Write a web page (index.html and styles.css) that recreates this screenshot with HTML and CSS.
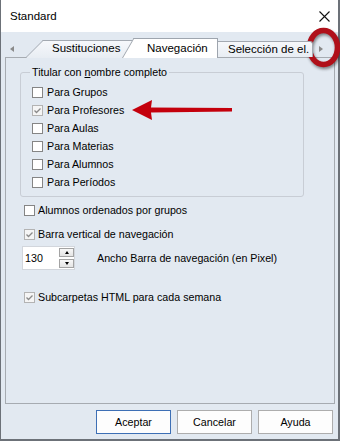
FILE: index.html
```html
<!DOCTYPE html>
<html lang="es">
  <head>
    <meta charset="UTF-8" />
    <meta name="viewport" content="width=device-width, initial-scale=1.0" />
    <title>Standard</title>
    <link rel="stylesheet" href="styles.css">
  </head>
  <body>
    <div class="window">
      <div class="titlebar">
        <span class="title">Standard</span>
        <svg class="close" width="11" height="11" viewBox="0 0 11 11">
          <path d="M0.5 0.5 L10.5 10.5 M10.5 0.5 L0.5 10.5" stroke="#111" stroke-width="1.1" fill="none" />
        </svg>
      </div>

      <div class="tabstrip">
        <div class="tab-scroll tab-scroll-left"><span class="arrow-left"></span></div>
        <div class="tab tab-back">Sustituciones</div>
        <div class="tab tab-active">Navegación</div>
        <div class="tab tab-last">Selección de el.</div>
        <div class="tab-scroll tab-scroll-right"><span class="arrow-right"></span></div>
      </div>

      <div class="panel">
        <fieldset class="group">
          <legend>Titular con <u>n</u>ombre completo</legend>
          <div class="check-row"><span class="box"></span>Para Grupos</div>
          <div class="check-row">
            <span class="box checked">
              <svg width="9" height="9" viewBox="0 0 9 9"><path d="M1.5 4.5 L3.5 6.5 L7.5 2.5" stroke="#8a8a8a" stroke-width="1.3" fill="none" /></svg>
            </span>Para Profesores
          </div>
          <div class="check-row"><span class="box"></span>Para Aulas</div>
          <div class="check-row"><span class="box"></span>Para Materias</div>
          <div class="check-row"><span class="box"></span>Para Alumnos</div>
          <div class="check-row"><span class="box"></span>Para Períodos</div>
        </fieldset>

        <div class="option option-sorted"><span class="box"></span>Alumnos ordenados por grupos</div>
        <div class="option option-navbar">
          <span class="box checked">
            <svg width="9" height="9" viewBox="0 0 9 9"><path d="M1.5 4.5 L3.5 6.5 L7.5 2.5" stroke="#8a8a8a" stroke-width="1.3" fill="none" /></svg>
          </span>Barra vertical de navegación
        </div>

        <div class="spin-row">
          <div class="spin">
            <span class="spin-value">130</span>
            <div class="spin-buttons">
              <span class="spin-btn"><span class="tri-up"></span></span>
              <span class="spin-btn"><span class="tri-down"></span></span>
            </div>
          </div>
          <span class="spin-label">Ancho Barra de navegación (en Pixel)</span>
        </div>

        <div class="option option-html">
          <span class="box checked">
            <svg width="9" height="9" viewBox="0 0 9 9"><path d="M1.5 4.5 L3.5 6.5 L7.5 2.5" stroke="#8a8a8a" stroke-width="1.3" fill="none" /></svg>
          </span>Subcarpetas HTML para cada semana
        </div>
      </div>

      <div class="footer">
        <button class="btn btn-default">Aceptar</button>
        <button class="btn">Cancelar</button>
        <button class="btn">Ayuda</button>
      </div>

      <!-- anotaciones rojas encima del diálogo -->
      <svg class="callout-arrow" width="104" height="26" viewBox="0 0 104 26">
        <polygon points="2,13 22,3 21,10.5 102,11 102,14.5 21,15.5 22,23" fill="#c4000c" />
      </svg>
      <svg class="callout-ring" width="40" height="46" viewBox="0 0 40 46">
        <ellipse cx="21.5" cy="21.5" rx="14" ry="17" stroke="#b0101a" stroke-width="5.6" fill="none" />
      </svg>
    </div>
  </body>
</html>
```

FILE: styles.css
```css
* {
  box-sizing: border-box;
}

body {
  margin: 0;
  background-color: #ffffff;
  font-family: "Liberation Sans", Arial, sans-serif;
  font-size: 10.7px;
  color: #000;
}

.window {
  position: relative;
  width: 340px;
  height: 441px;
  display: flex;
  flex-direction: column;
  background-color: #e2e9f1;
  border-left: 1px solid #6c7178;
  border-right: 2px solid #6c7178;
  border-bottom: 2px solid #6c7178;
}

/* barra de título */
.titlebar {
  height: 32px;
  flex: none;
  display: flex;
  align-items: center;
  justify-content: space-between;
  padding: 0 8px 0 9px;
  background-color: #ffffff;
  font-size: 11.5px;
}

.close {
  display: block;
}

/* pestañas */
.tabstrip {
  height: 25px;
  flex: none;
  display: flex;
  align-items: flex-end;
  font-size: 11.5px;
}

.tab-scroll {
  align-self: stretch;
  display: flex;
  align-items: flex-end;
  padding-bottom: 5px;
}

.tab-scroll-left {
  width: 24px;
  padding-left: 9px;
}

.tab-scroll-right {
  flex: 1;
  padding-left: 6px;
}

.arrow-left,
.arrow-right {
  width: 0;
  height: 0;
  border-top: 3.5px solid transparent;
  border-bottom: 3.5px solid transparent;
}

.arrow-left {
  border-right: 4px solid #8a8a8a;
}

.arrow-right {
  border-left: 4px solid #8a8a8a;
}

.tab {
  position: relative;
  z-index: 1;
  white-space: nowrap;
}

.tab::before,
.tab::after {
  content: "";
  position: absolute;
  z-index: -1;
}

.tab-back {
  width: 97px;
  height: 17px;
  line-height: 17px;
  padding-left: 27px;
}

.tab-back::before {
  left: 0;
  top: 0;
  width: 112px;
  height: 17px;
  transform: skewX(-45deg);
  transform-origin: 0 100%;
  border: 1px solid #a3a9b1;
  border-bottom: none;
  background: linear-gradient(#f6f8fb, #e8edf3);
}

.tab-active {
  z-index: 3;
  width: 96px;
  height: 20px;
  margin-bottom: -1px;
  padding: 1px 0 0 25px;
  line-height: 19px;
}

.tab-active::before {
  left: 0;
  top: 0;
  bottom: 0;
  width: 34px;
  transform: skewX(-30deg);
  transform-origin: 0 100%;
  border: solid #9ea5ae;
  border-width: 1px 0 0 1px;
  background-color: #ffffff;
}

.tab-active::after {
  left: 18px;
  right: 0;
  top: 0;
  bottom: 0;
  border: solid #9ea5ae;
  border-width: 1px 1px 0 0;
  background-color: #ffffff;
}

.tab-last {
  width: 96px;
  height: 16px;
  margin-left: -1px;
  padding-left: 10px;
  line-height: 15px;
  border: 1px solid #a3a9b1;
  border-bottom: none;
  border-top-right-radius: 3px;
  background: linear-gradient(#f6f8fb, #e8edf3);
  overflow: hidden;
}

/* contenido de la pestaña */
.panel {
  flex: none;
  height: 347px;
  margin: 0 3px 0 4px;
  border: 1px solid #a6abb1;
}

.group {
  width: 284px;
  margin: 8px 0 0 14px;
  padding: 4px 0 5px 11px;
  border: 1px solid #c8cdd5;
  border-radius: 3px;
  min-width: 0;
}

.group legend {
  padding: 0 2px;
  margin-left: -2px;
  line-height: 13px;
}

.check-row,
.option {
  display: flex;
  align-items: center;
  height: 18px;
}

.box {
  width: 11px;
  height: 11px;
  flex: none;
  display: flex;
  align-items: center;
  justify-content: center;
  margin-right: 4px;
  border: 1px solid #858585;
  background-color: #ffffff;
}

.box.checked {
  border-color: #b3b3b3;
  background-color: #f5f5f5;
}

.option {
  margin-left: 18px;
}

.option .box {
  margin-right: 3px;
}

.option-sorted {
  margin-top: 4px;
}

.option-navbar {
  margin-top: 6px;
}

.option-html {
  margin-top: 18px;
}

/* campo numérico */
.spin-row {
  display: flex;
  align-items: center;
  height: 24px;
  margin: 3px 0 0 16px;
}

.spin {
  display: flex;
  width: 53px;
  height: 24px;
  border: 1px solid #d2d6dc;
  background-color: #ffffff;
}

.spin-value {
  flex: 1;
  padding-left: 2px;
  line-height: 22px;
}

.spin-buttons {
  width: 15px;
  display: flex;
  flex-direction: column;
  justify-content: center;
  gap: 2px;
}

.spin-btn {
  height: 9px;
  display: flex;
  align-items: center;
  justify-content: center;
  border: 1px solid #a3a3a3;
  background: linear-gradient(#f8f8f8, #e4e4e4);
}

.tri-up,
.tri-down {
  width: 0;
  height: 0;
  border-left: 2.5px solid transparent;
  border-right: 2.5px solid transparent;
}

.tri-up {
  border-bottom: 3px solid #000;
}

.tri-down {
  border-top: 3px solid #000;
}

.spin-label {
  margin-left: 22px;
}

/* botones */
.footer {
  flex: 1;
  display: flex;
  justify-content: flex-end;
  align-items: flex-start;
  gap: 6px;
  padding: 6px 5px 0 0;
}

.btn {
  width: 75px;
  height: 24px;
  padding: 0;
  border: 1px solid #adadad;
  background-color: #fdfdfd;
  font: inherit;
  color: #000;
}

.btn-default {
  border-color: #3d6fb5;
}

/* anotaciones */
.callout-arrow {
  position: absolute;
  left: 129px;
  top: 97px;
}

.callout-ring {
  position: absolute;
  left: 301px;
  top: 26px;
  filter: drop-shadow(1px 2px 1.5px rgba(0, 0, 0, 0.45));
}
```
